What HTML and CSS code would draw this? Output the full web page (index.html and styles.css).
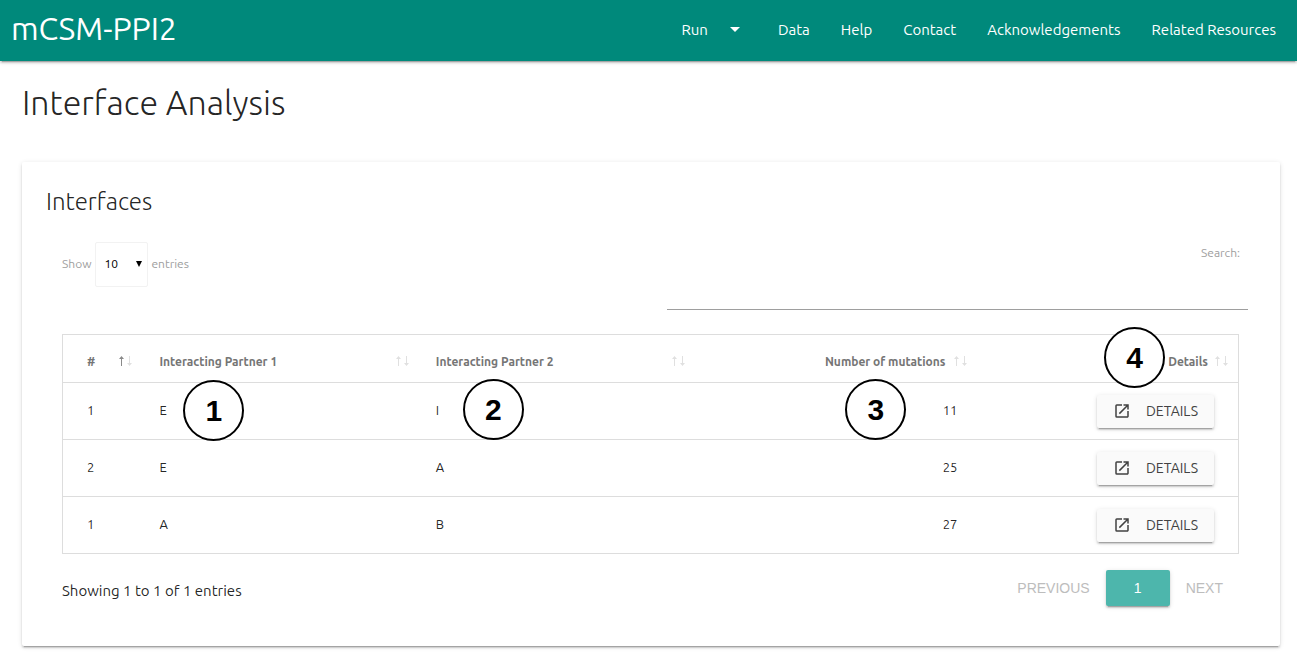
FILE: index.html
```html
<!DOCTYPE html>
<html lang="en">
<head>
<meta charset="utf-8">
<title>mCSM-PPI2</title>
<link rel="stylesheet" href="styles.css">
</head>
<body>
<svg class="defs" aria-hidden="true">
  <symbol id="open" viewBox="0 0 24 24"><path d="M19 19H5V5h7V3H5a2 2 0 0 0-2 2v14a2 2 0 0 0 2 2h14c1.100 0 2-.900 2-2v-7h-2v7zM14 3v2h3.590l-9.830 9.830 1.410 1.410L19 6.410V10h2V3h-7z"/></symbol>
  <symbol id="up" viewBox="0 0 5 10"><path d="M2 10V3H0L2.500 0 5 3H3v7z"/></symbol>
  <symbol id="down" viewBox="0 0 5 10"><path d="M2 0v7H0l2.500 3L5 7H3V0z"/></symbol>
</svg>
<header class="navbar">
  <a class="brand" href="#">mCSM-PPI2</a>
  <nav class="nav">
    <a class="nav-run" href="#">Run <svg class="caret" viewBox="0 0 10 5"><path d="M0 0h10L5 5z"/></svg></a>
    <a href="#">Data</a>
    <a href="#">Help</a>
    <a href="#">Contact</a>
    <a href="#">Acknowledgements</a>
    <a href="#">Related Resources</a>
  </nav>
</header>
<main class="page">
  <h1 class="title">Interface Analysis</h1>
  <section class="card">
    <h2 class="card-title">Interfaces</h2>
    <div class="table-area">
      <div class="controls">
        <div class="length">
          <label for="length">Show</label>
          <span class="select-wrap"><select id="length"><option>10</option><option>25</option><option>50</option></select><svg class="select-arrow" viewBox="0 0 6 6"><path d="M0 0h6L3 6z"/></svg></span>
          <label for="length">entries</label>
        </div>
        <div class="search">
          <label for="search">Search:</label>
          <input id="search" type="search">
        </div>
      </div>
      <table class="table">
        <colgroup><col class="c-num"><col class="c-partner"><col class="c-partner"><col class="c-mut"><col class="c-det"></colgroup>
        <thead>
          <tr>
            <th>#<span class="sort asc"><svg><use href="#up"/></svg><svg><use href="#down"/></svg></span></th>
            <th>Interacting Partner 1<span class="sort"><svg><use href="#up"/></svg><svg><use href="#down"/></svg></span></th>
            <th>Interacting Partner 2<span class="sort"><svg><use href="#up"/></svg><svg><use href="#down"/></svg></span></th>
            <th class="right">Number of mutations<span class="sort"><svg><use href="#up"/></svg><svg><use href="#down"/></svg></span></th>
            <th class="right">Details<span class="sort"><svg><use href="#up"/></svg><svg><use href="#down"/></svg></span><span class="marker m4">4</span></th>
          </tr>
        </thead>
        <tbody>
          <tr>
            <td>1</td>
            <td>E<span class="marker m1">1</span></td>
            <td>I<span class="marker m2">2</span></td>
            <td class="right">11<span class="marker m3">3</span></td>
            <td class="right"><button class="btn" type="button"><svg><use href="#open"/></svg>DETAILS</button></td>
          </tr>
          <tr>
            <td>2</td><td>E</td><td>A</td><td class="right">25</td>
            <td class="right"><button class="btn" type="button"><svg><use href="#open"/></svg>DETAILS</button></td>
          </tr>
          <tr>
            <td>1</td><td>A</td><td>B</td><td class="right">27</td>
            <td class="right"><button class="btn" type="button"><svg><use href="#open"/></svg>DETAILS</button></td>
          </tr>
        </tbody>
      </table>
      <div class="footer">
        <p class="info">Showing 1 to 1 of 1 entries</p>
        <div class="pager">
          <button class="page-btn" type="button" disabled>PREVIOUS</button>
          <button class="page-btn current" type="button">1</button>
          <button class="page-btn" type="button" disabled>NEXT</button>
        </div>
      </div>
    </div>
  </section>
</main>
</body>
</html>
```
FILE: styles.css
```css
* { box-sizing: border-box; }
body {
  margin: 0;
  background: #fff;
  color: rgba(0, 0, 0, 0.87);
  font: 15px/22px Ubuntu, "Noto Sans", sans-serif;
}
.defs { display: block; width: 0; height: 0; }
a { color: inherit; text-decoration: none; }

.navbar {
  display: flex;
  justify-content: space-between;
  align-items: center;
  height: 61px;
  padding: 0 21px 2px 11px;
  background: #00897b;
  color: #fff;
  box-shadow: 0 2px 2px rgba(0, 0, 0, 0.14), 0 1px 5px rgba(0, 0, 0, 0.12), 0 3px 1px -2px rgba(0, 0, 0, 0.2);
}
.brand { padding-bottom: 4px; font-size: 32px; line-height: 54px; }
.nav { display: flex; gap: 31px; }
.nav-run { display: flex; align-items: center; gap: 22px; padding-right: 7px; }
.caret { width: 10px; height: 5px; fill: #fff; }

.page { padding: 19px 17px 17px 22px; }
.title { margin: 0; font-size: 34px; line-height: 44px; font-weight: 300; }
.card {
  margin-top: 38px;
  padding: 24px;
  border-radius: 2px;
  box-shadow: 0 2px 2px rgba(0, 0, 0, 0.14), 0 1px 5px rgba(0, 0, 0, 0.12), 0 3px 1px -2px rgba(0, 0, 0, 0.2);
}
.card-title { margin: 0; font-size: 24px; line-height: 32px; font-weight: 300; }
.table-area { padding: 16px 17px 16px 16px; }

.controls { display: flex; justify-content: space-between; }
.length, .search { color: #9e9e9e; font-size: 12px; }
.length { display: flex; align-items: center; gap: 3px; height: 60px; }
.select-wrap { position: relative; padding-left: 1px; }
.select-wrap select {
  display: block;
  appearance: none;
  width: 53px;
  height: 45px;
  padding: 0 8px;
  border: 1px solid #f2f2f2;
  border-radius: 2px;
  background: #fff;
  color: #000;
  font: inherit;
}
.select-arrow { position: absolute; top: 19px; right: 6px; width: 6px; height: 6px; }
.search { display: flex; flex-direction: column; width: 50%; margin-right: -9px; padding: 0 0 0 7px; }
.search label { align-self: flex-end; padding: 8px 8px 0 0; }
.search input {
  width: 100%;
  height: 46px;
  border: 0;
  border-bottom: 1px solid #9e9e9e;
  background: transparent;
  font: inherit;
}

.table {
  width: 100%;
  margin-top: 24px;
  border: 1px solid #ddd;
  border-collapse: collapse;
  table-layout: fixed;
  font-size: 13px;
}
.c-num { width: 6.8%; }
.c-partner { width: 23.5%; }
.c-mut { width: 24%; }
.c-det { width: 22.2%; }
th, td { position: relative; padding: 0 20px 0 17px; border-bottom: 1px solid #ddd; text-align: left; }
th:first-child, td:first-child { padding-left: 24px; }
th { height: 48px; padding-top: 6px; padding-right: 32px; color: #757575; font-size: 12px; font-weight: 600; white-space: nowrap; }
th:last-child { padding-right: 30px; }
td { height: 57px; padding-bottom: 2px; }
td:last-child { padding-right: 24px; padding-bottom: 0; }
.right { text-align: right; }
.sort { position: absolute; top: 21px; right: 10px; display: flex; gap: 3px; }
.sort svg { width: 5px; height: 10px; fill: #e0e0e0; }
.sort.asc svg:first-child { fill: #8a8a8a; }
.btn {
  display: inline-flex;
  align-items: center;
  gap: 15px;
  height: 33px;
  padding: 0 16px;
  border: 0;
  border-radius: 2px;
  background: #fafafa;
  color: #424242;
  font: 14px/20px Ubuntu, "Noto Sans", sans-serif;
  vertical-align: middle;
  box-shadow: 0 2px 2px rgba(0, 0, 0, 0.14), 0 1px 5px rgba(0, 0, 0, 0.12), 0 3px 1px -2px rgba(0, 0, 0, 0.2);
}
.btn svg { width: 18px; height: 18px; fill: currentColor; }

.marker {
  position: absolute;
  z-index: 1;
  width: 61px;
  height: 61px;
  border: 2px solid #000;
  border-radius: 50%;
  background: #fff;
  color: #000;
  font: bold 30px/57px "Liberation Sans", Arial, sans-serif;
  text-align: center;
}
.m1 { top: -3px; left: 41px; }
.m2 { top: -4px; left: 44px; }
.m3 { top: -4px; right: 71px; }
.m4 { top: -8px; right: 73px; }

.footer { display: flex; justify-content: space-between; padding-top: 16px; }
.info { margin: 0; padding-top: 10px; }
.pager { display: flex; }
.page-btn {
  height: 36px;
  padding: 0 16px;
  border: 0;
  background: transparent;
  font: 14px/36px "Liberation Sans", Arial, sans-serif;
}
.page-btn:disabled { color: #bdbdbd; }
.current {
  width: 64px;
  border-radius: 2px;
  background: #4db6ac;
  color: #fff;
  box-shadow: 0 2px 2px rgba(0, 0, 0, 0.14), 0 1px 5px rgba(0, 0, 0, 0.12), 0 3px 1px -2px rgba(0, 0, 0, 0.2);
}
```
